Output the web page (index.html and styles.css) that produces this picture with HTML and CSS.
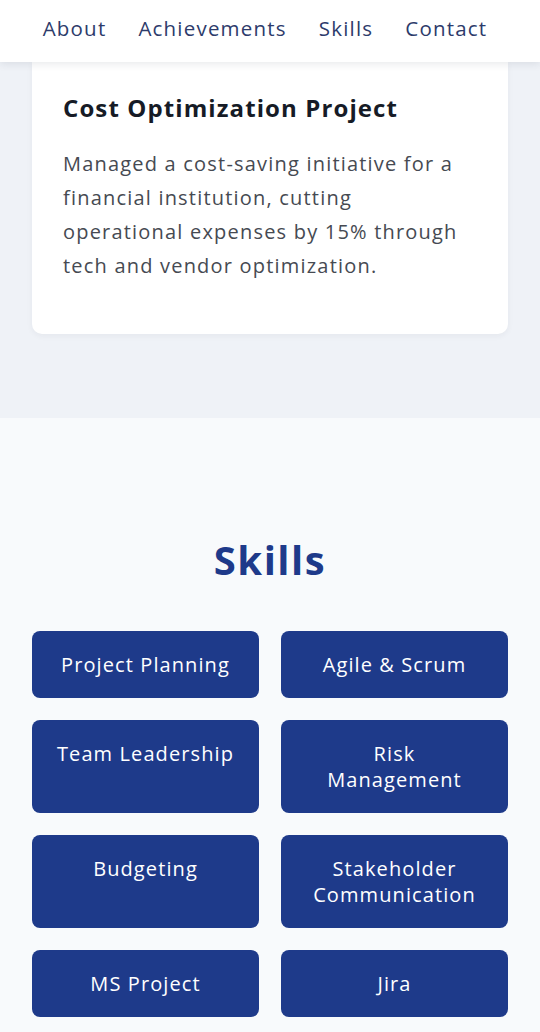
FILE: index.html
```html
<!DOCTYPE html>
<html lang="en">
<head>
<meta charset="utf-8">
<title>Portfolio</title>
<link rel="stylesheet" href="styles.css">
</head>
<body>
<header class="site-header">
  <nav class="nav">
    <a href="#about">About</a>
    <a href="#achievements">Achievements</a>
    <a href="#skills">Skills</a>
    <a href="#contact">Contact</a>
  </nav>
</header>
<section class="achievements" id="achievements">
  <article class="card">
    <h3 class="card-title">Cost Optimization Project</h3>
    <p class="card-text">Managed a cost-saving initiative for a financial institution, cutting operational expenses by 15% through tech and vendor optimization.</p>
  </article>
</section>
<section class="skills" id="skills">
  <h2 class="skills-title">Skills</h2>
  <div class="skills-grid">
    <div class="skill">Project Planning</div>
    <div class="skill">Agile &amp; Scrum</div>
    <div class="skill">Team Leadership</div>
    <div class="skill">Risk Management</div>
    <div class="skill">Budgeting</div>
    <div class="skill">Stakeholder Communication</div>
    <div class="skill">MS Project</div>
    <div class="skill">Jira</div>
  </div>
</section>
</body>
</html>
```
FILE: styles.css
```css
* { box-sizing: border-box; }
html, body { margin: 0; padding: 0; }
body {
  font-family: "Open Sans", "Noto Sans", sans-serif;
  background: #f8fafc;
  color: #333;
}
.site-header {
  position: relative;
  z-index: 2;
  height: 62px;
  background: #ffffff;
  box-shadow: 0 2px 8px rgba(30, 41, 59, 0.10);
  display: flex;
  align-items: center;
  justify-content: center;
  padding-right: 10px;
}
.nav {
  display: flex;
  gap: 32px;
  padding-bottom: 6px;
}
.nav a {
  color: #2d3b6b;
  text-decoration: none;
  font-size: 20.5px;
  letter-spacing: 1.2px;
}
.achievements {
  background: #eff2f7;
  padding: 0 32px 84px;
}
.card {
  background: #ffffff;
  border-radius: 0 0 10px 10px;
  padding: 30px 31px 51px;
  box-shadow: 0 2px 6px rgba(30, 41, 59, 0.05);
}
.card-title {
  margin: 0 0 23px;
  font-size: 24px;
  font-weight: 700;
  line-height: 32px;
  color: #161b26;
  letter-spacing: 1.1px;
}
.card-text {
  margin: 0;
  max-width: 400px;
  font-size: 20px;
  line-height: 34px;
  color: #464a52;
  letter-spacing: 1.2px;
}
.skills {
  padding: 116px 32px 16px;
}
.skills-title {
  margin: 0 0 45px;
  text-align: center;
  font-size: 40px;
  line-height: 52px;
  font-weight: 700;
  color: #1e3a8a;
  letter-spacing: 1.5px;
}
.skills-grid {
  display: grid;
  grid-template-columns: 1fr 1fr;
  gap: 22px;
}
.skill {
  background: #1e3a8a;
  color: #ffffff;
  border-radius: 8px;
  padding: 21px 24px 20px;
  text-align: center;
  font-size: 20px;
  line-height: 26px;
  letter-spacing: 1.1px;
}
```
